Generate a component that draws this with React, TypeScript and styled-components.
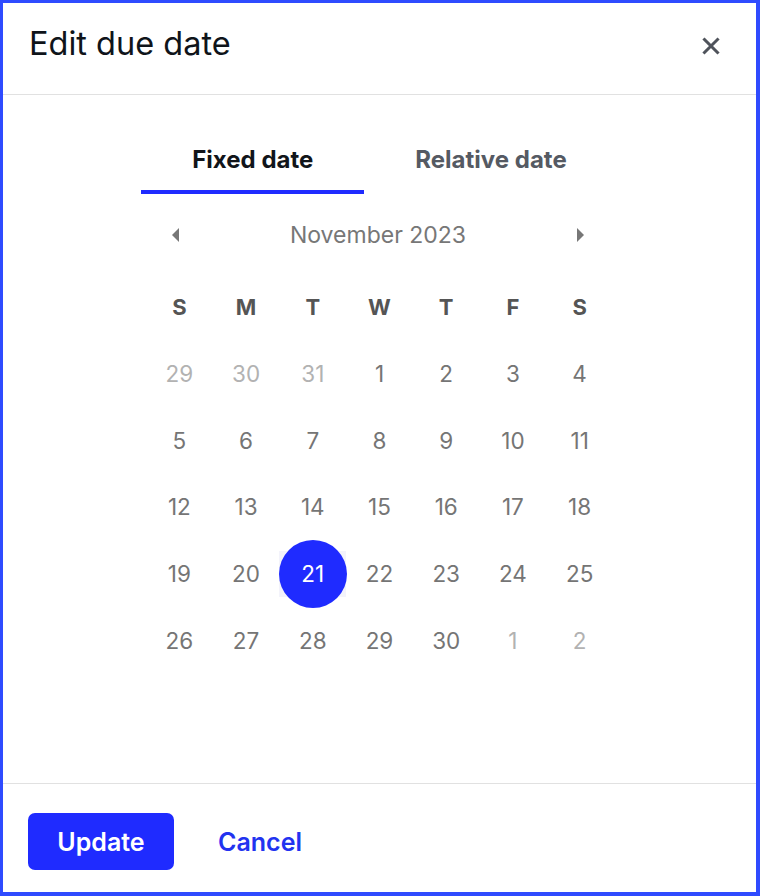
import React from "react";
import styled, { createGlobalStyle } from "styled-components";

const Global = createGlobalStyle`
  html, body { margin: 0; padding: 0; background: #fff; }
  * { box-sizing: border-box; }
  body { font-family: Inter, "Noto Sans", "Liberation Sans", sans-serif; }
`;

const Frame = styled.div`
  width: 760px;
  height: 896px;
  border-style: solid;
  border-color: #2f4bff;
  border-width: 3px 4px 4px 3px;
  display: flex;
  flex-direction: column;
  background: #fff;
`;

const Header = styled.header`
  height: 92px;
  flex: none;
  display: flex;
  align-items: center;
  justify-content: space-between;
  padding: 0 36px 0 26px;
  border-bottom: 1px solid #e1e1e1;
`;

const Title = styled.h1`
  margin: 0;
  font-size: 32.5px;
  font-weight: 400;
  color: #0f141a;
  margin-top: -11px;
`;

const CloseButton = styled.button`
  border: 0;
  background: none;
  padding: 0;
  width: 18px;
  height: 18px;
  display: flex;
  margin-top: -5px;
  color: #4f535b;
  cursor: pointer;
`;

const Body = styled.main`
  flex: 1;
  display: flex;
  flex-direction: column;
  align-items: center;
  padding-top: 30px;
`;

const Tabs = styled.div`
  display: flex;
`;

const Tab = styled.button<{ $active?: boolean }>`
  border: 0;
  background: none;
  font-family: inherit;
  font-size: 24px;
  font-weight: 700;
  line-height: 30px;
  padding: 20px 51px 15px;
  color: ${(p) => (p.$active ? "#11151a" : "#555a63")};
  border-bottom: 4px solid ${(p) => (p.$active ? "#1f2bff" : "transparent")};
  cursor: pointer;
`;

const Calendar = styled.div`
  width: 467px;
  margin-top: 22px;
  display: flex;
  flex-direction: column;
`;

const Nav = styled.div`
  height: 38px;
  display: flex;
  align-items: center;
  justify-content: space-between;
  padding: 0 29px 0 26px;
`;

const Arrow = styled.button`
  border: 0;
  background: none;
  padding: 0;
  display: flex;
  color: #777;
  cursor: pointer;
`;

const MonthLabel = styled.div`
  font-size: 23px;
  color: #777;
`;

const Grid = styled.div`
  display: grid;
  grid-template-columns: repeat(7, 1fr);
  grid-auto-rows: 46px;
  row-gap: 20.67px;
  margin-top: 30px;
`;

const WeekDay = styled.div`
  display: flex;
  align-items: center;
  justify-content: center;
  font-size: 22px;
  font-weight: 700;
  color: #555;
`;

const Day = styled.div<{ $muted?: boolean; $selected?: boolean }>`
  position: relative;
  display: flex;
  align-items: center;
  justify-content: center;
  font-size: 22.5px;
  color: ${(p) => (p.$selected ? "#fff" : p.$muted ? "#b2b2b2" : "#757575")};
  background: ${(p) => (p.$selected ? "#f3f3fb" : "transparent")};
  z-index: 0;
  &::before {
    content: "";
    display: ${(p) => (p.$selected ? "block" : "none")};
    position: absolute;
    width: 68px;
    height: 68px;
    border-radius: 50%;
    background: #1f2bff;
    left: 50%;
    top: 50%;
    transform: translate(-50%, -50%);
    z-index: -1;
  }
`;

const Footer = styled.footer`
  flex: none;
  border-top: 1px solid #e1e1e1;
  padding: 29px 25px 22px;
  display: flex;
  align-items: center;
  gap: 28px;
`;

const PrimaryButton = styled.button`
  width: 146px;
  height: 57px;
  border: 0;
  border-radius: 7px;
  background: #1f2bff;
  color: #fff;
  font-family: inherit;
  font-size: 25px;
  font-weight: 600;
  cursor: pointer;
`;

const TextButton = styled.button`
  border: 0;
  background: none;
  padding: 0 16px;
  height: 57px;
  color: #2233f0;
  font-family: inherit;
  font-size: 25px;
  font-weight: 600;
  cursor: pointer;
`;

const weekdays = ["S", "M", "T", "W", "T", "F", "S"];

type D = { n: number; muted?: boolean; selected?: boolean };

const days: D[] = [
  { n: 29, muted: true },
  { n: 30, muted: true },
  { n: 31, muted: true },
  ...Array.from({ length: 30 }, (_, i) => ({ n: i + 1, selected: i + 1 === 21 })),
  { n: 1, muted: true },
  { n: 2, muted: true },
];

export default function App() {
  return (
    <>
      <Global />
      <Frame>
        <Header>
          <Title>Edit due date</Title>
          <CloseButton aria-label="Close">
            <svg width="18" height="18" viewBox="0 0 18 18">
              <path d="M2.5 2.5 L15.5 15.5 M15.5 2.5 L2.5 15.5" stroke="currentColor" strokeWidth="3" strokeLinecap="square" />
            </svg>
          </CloseButton>
        </Header>
        <Body>
          <Tabs>
            <Tab $active>Fixed date</Tab>
            <Tab>Relative date</Tab>
          </Tabs>
          <Calendar>
            <Nav>
              <Arrow aria-label="Previous month">
                <svg width="7" height="14" viewBox="0 0 7 14">
                  <path d="M7 0 L0 7 L7 14 Z" fill="currentColor" />
                </svg>
              </Arrow>
              <MonthLabel>November 2023</MonthLabel>
              <Arrow aria-label="Next month">
                <svg width="7" height="14" viewBox="0 0 7 14">
                  <path d="M0 0 L7 7 L0 14 Z" fill="currentColor" />
                </svg>
              </Arrow>
            </Nav>
            <Grid>
              {weekdays.map((w, i) => (
                <WeekDay key={i}>{w}</WeekDay>
              ))}
              {days.map((d, i) => (
                <Day key={i} $muted={d.muted} $selected={d.selected}>
                  {d.n}
                </Day>
              ))}
            </Grid>
          </Calendar>
        </Body>
        <Footer>
          <PrimaryButton>Update</PrimaryButton>
          <TextButton>Cancel</TextButton>
        </Footer>
      </Frame>
    </>
  );
}
